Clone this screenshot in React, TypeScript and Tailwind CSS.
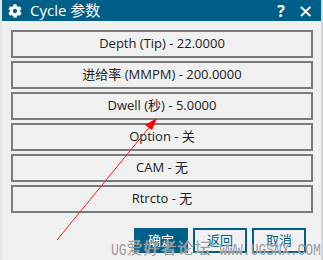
import { FaCog } from 'react-icons/fa';

const items = [
  'Depth (Tip) - 22.0000',
  '进给率 (MMPM) - 200.0000',
  'Dwell (秒) - 5.0000',
  'Option - 关',
  'CAM - 无',
  'Rtrcto - 无',
];

export default function App() {
  return (
    <div
      className="relative h-[260px] w-[323px] overflow-hidden border-l-2 border-r-2 border-l-[#e4e4e4] border-r-[#d6d6d6] bg-[#f0f0f0]"
      style={{ fontFamily: '"Open Sans", "Noto Sans CJK SC", sans-serif' }}
    >
      <div className="flex h-[21px] items-center bg-[#005f87] pl-[6px] pr-[8px] text-white">
        <FaCog className="h-[14px] w-[14px]" />
        <span className="ml-[8px] text-[15px] leading-none">Cycle 参数</span>
        <span className="ml-auto text-[16px] font-bold leading-none">?</span>
        <span className="ml-[13px] text-[18px] leading-none">✕</span>
      </div>

      <div className="flex flex-col gap-[3px] pl-[9px] pr-[8px] pt-[9px]">
        {items.map((label) => (
          <button
            key={label}
            type="button"
            className="flex h-[28px] items-center justify-center border-2 border-[#7a7a7a] bg-[#f0f0f0] text-[13px] text-[#222]"
          >
            {label}
          </button>
        ))}
      </div>

      <div className="mt-[15px] flex justify-end gap-[5px] pr-[15px]">
        <button type="button" className="h-[25px] w-[54px] bg-[#005f87] text-[13px] text-white">
          确定
        </button>
        <button type="button" className="h-[25px] w-[54px] border-2 border-[#005f87] text-[13px] text-[#005f87]">
          返回
        </button>
        <button type="button" className="h-[25px] w-[54px] border-2 border-[#005f87] text-[13px] text-[#005f87]">
          取消
        </button>
      </div>

      {/* watermark */}
      <div
        className="absolute left-[109px] top-[235px] flex items-baseline whitespace-nowrap text-[#8c8c8c]/90"
        style={{ textShadow: '0 0 1px #fff' }}
      >
        <span className="inline-block scale-y-[1.3] text-[13px]" style={{ fontFamily: '"Liberation Mono", monospace' }}>UG</span>
        <span className="text-[16px] tracking-[1px]" style={{ fontFamily: '"Noto Sans CJK SC", sans-serif' }}>爱好者论坛</span>
        <span className="inline-block scale-y-[1.3] text-[13px]" style={{ fontFamily: '"Liberation Mono", monospace' }}>&nbsp;WWW.UGSNX.COM</span>
      </div>

      <svg className="pointer-events-none absolute left-0 top-0" width="323" height="260">
        <line x1="55" y1="240" x2="150" y2="124" stroke="#ff2020" strokeWidth="1" />
        <polygon points="155,118 143,125 150,130" fill="#ff0000" />
      </svg>
    </div>
  );
}
